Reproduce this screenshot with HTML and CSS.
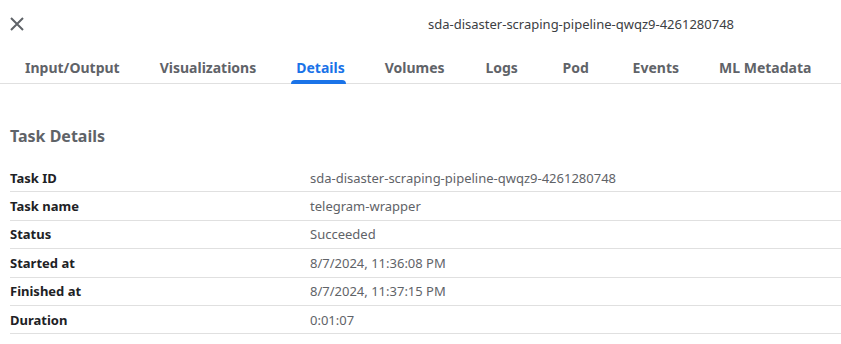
FILE: index.html
```html
<!DOCTYPE html>
<html>
<head>
<meta charset="utf-8">
<link rel="stylesheet" href="styles.css">
</head>
<body>
<div class="page">
  <header class="header">
    <button class="close" aria-label="Close">
      <svg width="14" height="14" viewBox="0 0 14 14"><path d="M1 1L13 13M13 1L1 13" stroke="#5f6368" stroke-width="2" fill="none"/></svg>
    </button>
    <div class="title">sda-disaster-scraping-pipeline-qwqz9-4261280748</div>
  </header>
  <nav class="tabs">
    <div class="tab"><span>Input/Output</span></div>
    <div class="tab"><span>Visualizations</span></div>
    <div class="tab active"><span>Details</span></div>
    <div class="tab"><span>Volumes</span></div>
    <div class="tab"><span>Logs</span></div>
    <div class="tab"><span>Pod</span></div>
    <div class="tab"><span>Events</span></div>
    <div class="tab"><span>ML Metadata</span></div>
  </nav>
  <section class="details">
    <h2 class="heading">Task Details</h2>
    <div class="table">
      <div class="row"><div class="key">Task ID</div><div class="val">sda-disaster-scraping-pipeline-qwqz9-4261280748</div></div>
      <div class="row"><div class="key">Task name</div><div class="val">telegram-wrapper</div></div>
      <div class="row"><div class="key">Status</div><div class="val">Succeeded</div></div>
      <div class="row"><div class="key">Started at</div><div class="val">8/7/2024, 11:36:08 PM</div></div>
      <div class="row"><div class="key">Finished at</div><div class="val">8/7/2024, 11:37:15 PM</div></div>
      <div class="row"><div class="key">Duration</div><div class="val">0:01:07</div></div>
    </div>
  </section>
</div>
</body>
</html>
```

FILE: styles.css
```css
* { box-sizing: border-box; }
html, body { margin: 0; padding: 0; background: #fff; }
body { font-family: "Noto Sans", "Open Sans", sans-serif; color: #202124; }

.header {
  display: flex;
  align-items: center;
  height: 48px;
  padding-left: 10px;
}
.close {
  width: 14px; height: 14px;
  padding: 0; border: 0; background: none;
  display: flex;
}
.title {
  margin-left: 404px;
  font-size: 13px;
  color: #3c4043;
}

.tabs {
  display: flex;
  padding-left: 5px;
  height: 36px;
  border-bottom: 1px solid #e0e0e0;
}
.tab {
  min-width: 74px;
  padding: 0 20px;
  display: flex;
  justify-content: center;
  align-items: center;
  font-size: 14px;
  font-weight: 700;
  color: #5f6368;
  padding-top: 4px;
}
.tab span { position: relative; }
.tab.active { color: #1a73e8; }
.tab.active span::after {
  content: "";
  position: absolute;
  left: -5px; right: -1px;
  top: 22px;
  height: 4px;
  background: #1a73e8;
  border-radius: 4px 4px 0 0;
}

.details { padding: 0 0 0 10px; }
.heading {
  margin: 0;
  padding-top: 41px;
  height: 80px;
  font-size: 16px;
  font-weight: 700;
  color: #5f6368;
  line-height: 22px;
}
.row {
  display: grid;
  grid-template-columns: 300px 1fr;
  align-items: center;
  height: 28.4px;
  border-bottom: 1px solid #e0e0e0;
  font-size: 13px;
}
.key { font-weight: 700; color: #202124; }
.val { color: #5f6368; }
```
